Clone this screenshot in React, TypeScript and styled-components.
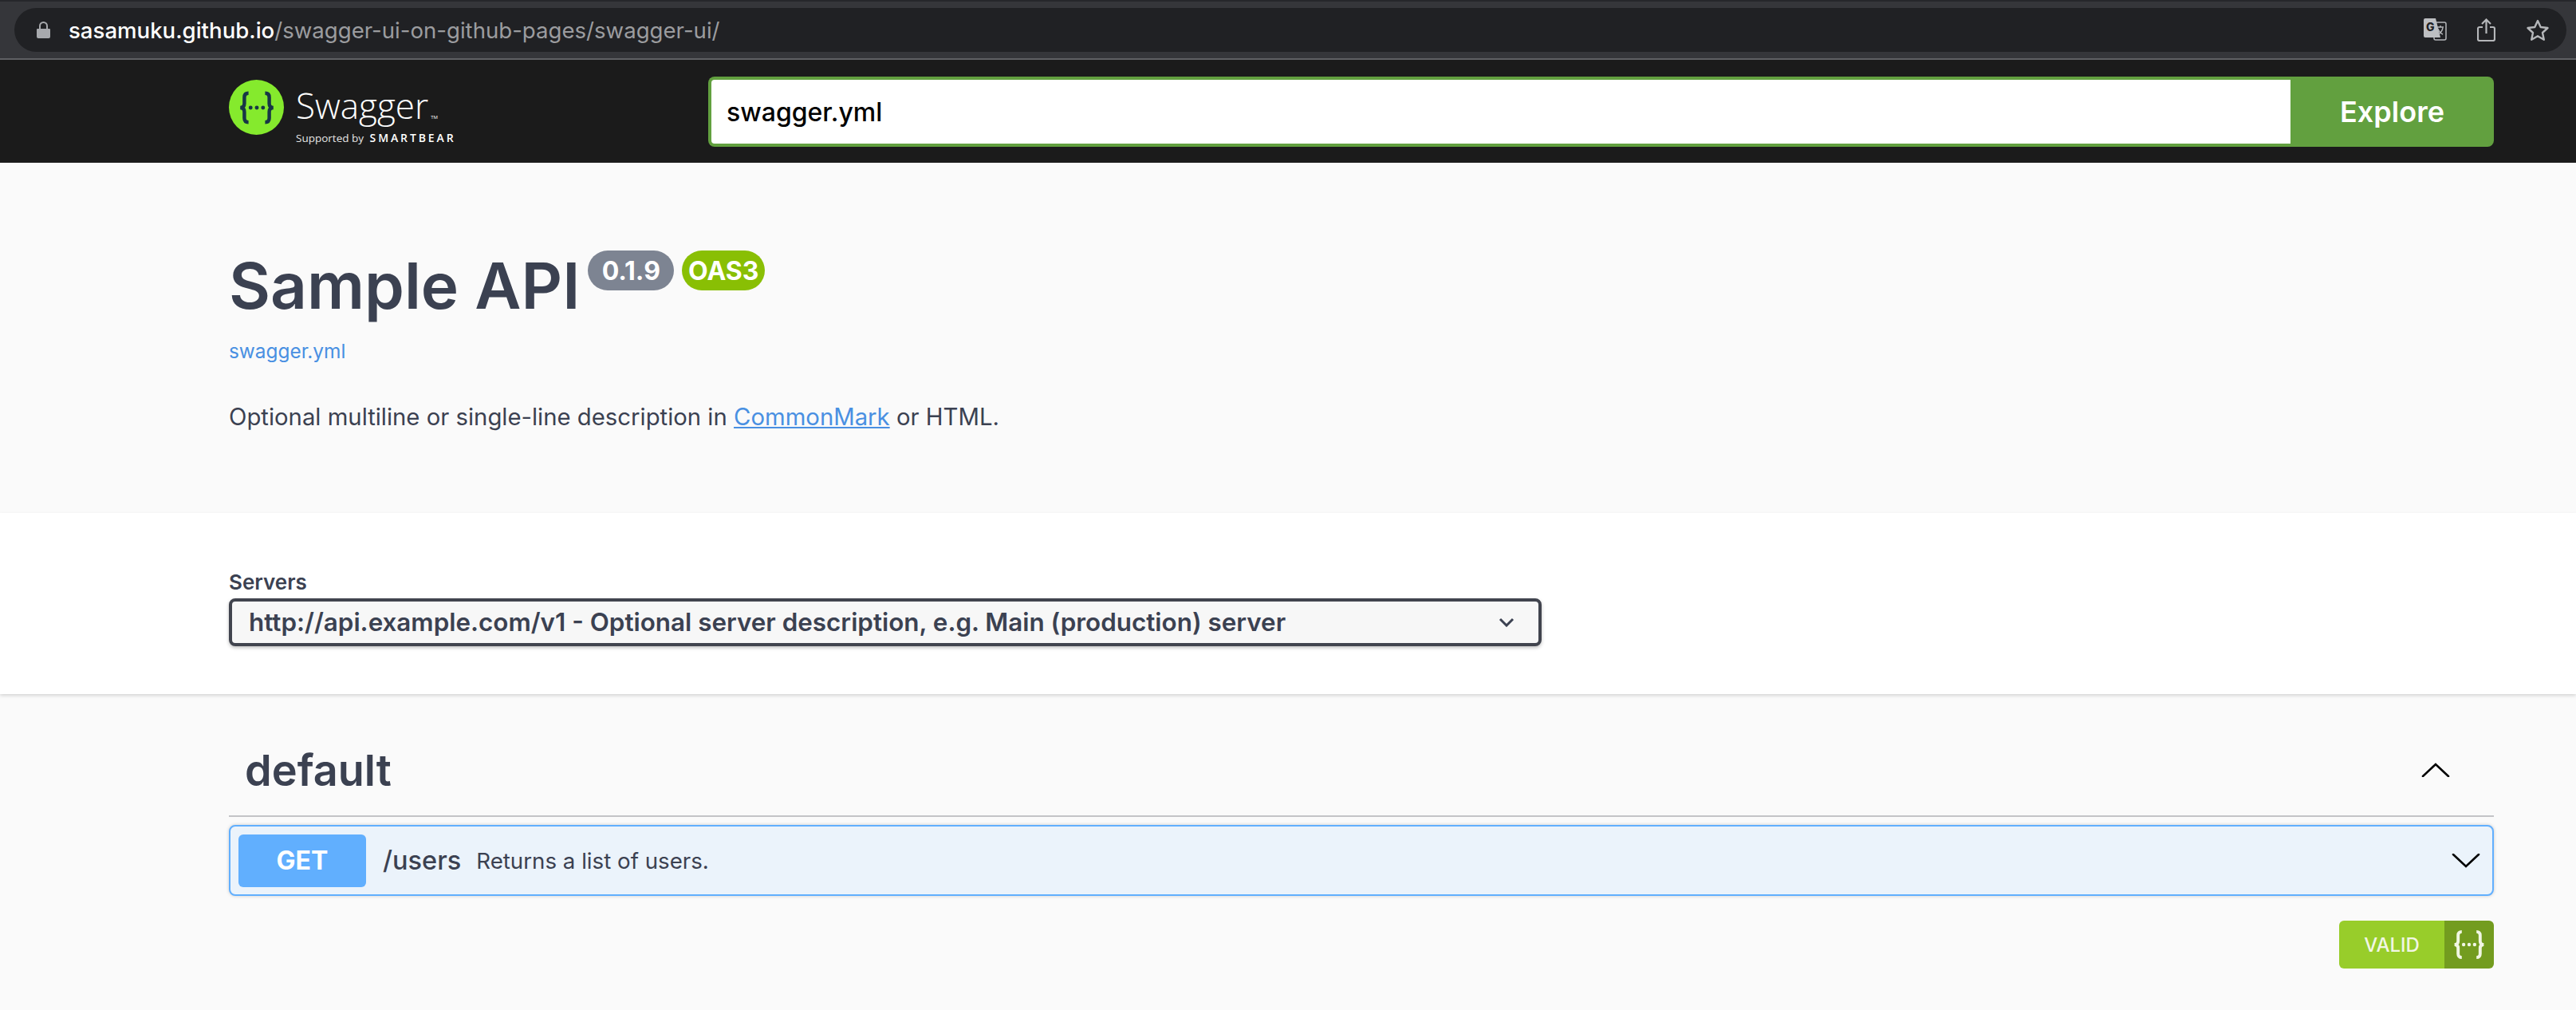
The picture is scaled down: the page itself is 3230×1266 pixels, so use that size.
import styled, {createGlobalStyle} from 'styled-components';

const GlobalStyle = createGlobalStyle`
  html, body {
    margin: 0;
    padding: 0;
    background: #fafafa;
  }
  body {
    width: 3230px;
    height: 1266px;
    overflow: hidden;
    font-family: Inter, "Liberation Sans", sans-serif;
    color: #3b4151;
  }
  * {
    box-sizing: border-box;
  }
`;

function BraceIcon({size, color}: {size: number; color: string}) {
  return (
    <svg width={size} height={size} viewBox="0 0 40 40" fill="none">
      <path
        d="M12 6c-3 0-4 1.500-4 4v6c0 2.500-1.500 4-4 4 2.500 0 4 1.500 4 4v6c0 2.500 1 4 4 4M28 6c3 0 4 1.500 4 4v6c0 2.500 1.500 4 4 4-2.500 0-4 1.500-4 4v6c0 2.500-1 4-4 4"
        stroke={color}
        strokeWidth="3.400"
      />
      <circle cx="14" cy="20" r="1.900" fill={color} />
      <circle cx="20" cy="20" r="1.900" fill={color} />
      <circle cx="26" cy="20" r="1.900" fill={color} />
    </svg>
  );
}

function Chevron({up, size}: {up?: boolean; size: number}) {
  return (
    <svg width={size} height={size / 2} viewBox="0 0 36 18" fill="none">
      <path
        d={up ? 'M2 17L18 2l16 15' : 'M2 1l16 15L34 1'}
        stroke="#000"
        strokeWidth="2.600"
        strokeLinecap="round"
      />
    </svg>
  );
}

function App() {
  return (
    <>
      <GlobalStyle />
      <BrowserBar>
        <UrlPill>
          <svg width="17" height="21" viewBox="0 0 17 21" fill="#a7a9ad">
            <path d="M1 9h15a1 1 0 0 1 1 1v9a2 2 0 0 1-2 2H2a2 2 0 0 1-2-2v-9a1 1 0 0 1 1-1z" />
            <path d="M4 9V5.500a4.500 4.500 0 0 1 9 0V9" fill="none" stroke="#a7a9ad" strokeWidth="2" />
          </svg>
          <UrlText>
            <b>sasamuku.github.io</b>/swagger-ui-on-github-pages/swagger-ui/
          </UrlText>
          <PillIcons>
            <svg width="29" height="29" viewBox="0 0 29 29">
              <rect x="13" y="5" width="15" height="22" rx="2" fill="none" stroke="#b5b7ba" strokeWidth="1.500" />
              <path d="M2 0h13l6 24H2a2 2 0 0 1-2-2V2a2 2 0 0 1 2-2z" fill="#bdbfc2" />
              <text x="3" y="16" fontSize="14" fontWeight="800" fill="#202124" fontFamily="Inter">G</text>
              <path d="M17 11h8M21 9v2M24 12c-1 5-4 7-6 8M18 13c1 3 4 6 6 7" fill="none" stroke="#b5b7ba" strokeWidth="1.400" />
            </svg>
            <svg width="23" height="29" viewBox="0 0 23 29" fill="none" stroke="#b5b7ba" strokeWidth="2.200">
              <path d="M7 11H3a2 2 0 0 0-2 2v13a2 2 0 0 0 2 2h17a2 2 0 0 0 2-2V13a2 2 0 0 0-2-2h-4" />
              <path d="M11.500 19V2M6 7l5.500-5.500L17 7" />
            </svg>
            <svg width="30" height="29" viewBox="0 0 30 29" fill="none" stroke="#b5b7ba" strokeWidth="2.400">
              <path d="M15 3l3.700 8 8.800 1-6.500 6 1.800 8.700L15 22.300l-7.800 4.400L9 18l-6.500-6 8.800-1z" strokeLinejoin="round" />
            </svg>
          </PillIcons>
        </UrlPill>
      </BrowserBar>

      <Topbar>
        <Wrapper>
          <Logo>
            <LogoCircle>
              <BraceIcon size={52} color="#173646" />
            </LogoCircle>
            <LogoWords>
              <LogoName>
                Swagger<small>TM</small>
              </LogoName>
              <LogoSub>
                Supported by <strong>SMARTBEAR</strong>
              </LogoSub>
            </LogoWords>
          </Logo>
          <SearchForm>
            <SearchInput>swagger.yml</SearchInput>
            <ExploreButton>Explore</ExploreButton>
          </SearchForm>
        </Wrapper>
      </Topbar>

      <InfoSection>
        <TitleRow>
          <Title>Sample API</Title>
          <Badge $color="#7d8492" $width={108}>0.1.9</Badge>
          <Badge $color="#89bf04" $width={104}>OAS3</Badge>
        </TitleRow>
        <SpecLink>swagger.yml</SpecLink>
        <Description>
          Optional multiline or single-line description in <u>CommonMark</u> or HTML.
        </Description>
      </InfoSection>

      <ServersSection>
        <ServersLabel>Servers</ServersLabel>
        <ServerSelect>
          http://api.example.com/v1 - Optional server description, e.g. Main (production) server
          <svg width="20" height="12" viewBox="0 0 20 12" fill="none">
            <path d="M2 2l8 8 8-8" stroke="#3b4151" strokeWidth="3" />
          </svg>
        </ServerSelect>
      </ServersSection>

      <Operations>
        <TagHeader>
          <TagName>default</TagName>
          <Chevron up size={36} />
        </TagHeader>
        <OperationRow>
          <MethodBadge>GET</MethodBadge>
          <PathText>/users</PathText>
          <Summary>Returns a list of users.</Summary>
          <Chevron size={36} />
        </OperationRow>
        <ValidatorRow>
          <ValidBadge>
            <ValidLabel>VALID</ValidLabel>
            <ValidIcon>
              <BraceIcon size={46} color="#f1f6e4" />
            </ValidIcon>
          </ValidBadge>
        </ValidatorRow>
      </Operations>
    </>
  );
}

const BrowserBar = styled.div`
  height: 75px;
  padding: 10px 12px 8px 18px;
  background: #35363a;
  border-top: 2px solid #26272b;
  border-bottom: 2px solid #5f6064;
`;

const UrlPill = styled.div`
  height: 55px;
  margin-top: -2px;
  display: flex;
  align-items: center;
  padding: 0 21px 0 28px;
  background: #202124;
  border-radius: 28px;
`;

const UrlText = styled.div`
  margin-left: 23px;
  flex: 1;
  font-size: 27.600px;
  color: #9b9c9f;

  b {
    font-weight: 500;
    color: #fff;
  }
`;

const PillIcons = styled.div`
  display: flex;
  align-items: center;
  gap: 38px;
`;

const Topbar = styled.div`
  height: 129px;
  background: #1b1b1b;
`;

const Wrapper = styled.div`
  width: 2840px;
  margin-left: 287px;
  padding-top: 21px;
  display: flex;
  align-items: flex-start;
  justify-content: space-between;
`;

const Logo = styled.div`
  margin-top: 4px;
  display: flex;
  align-items: flex-start;
  gap: 15px;
`;

const LogoCircle = styled.div`
  width: 69px;
  height: 69px;
  display: flex;
  align-items: center;
  justify-content: center;
  border-radius: 50%;
  background: #85ea2d;
`;

const LogoWords = styled.div`
  margin-top: 7px;
  display: flex;
  flex-direction: column;
  font-family: 'Open Sans', sans-serif;
  color: #fff;
`;

const LogoName = styled.div`
  font-size: 44px;
  font-weight: 300;
  line-height: 50px;

  small {
    margin-left: 3px;
    font-size: 6px;
    font-weight: 400;
  }
`;

const LogoSub = styled.div`
  margin-top: -7px;
  font-size: 13.500px;
  line-height: 16px;
  white-space: nowrap;
  color: #e4e4e4;

  strong {
    margin-left: 4px;
    font-size: 14px;
    font-weight: 600;
    letter-spacing: 2.900px;
    color: #fff;
  }
`;

const SearchForm = styled.div`
  width: 2239px;
  height: 88px;
  display: flex;
`;

const SearchInput = styled.div`
  flex: 1;
  display: flex;
  align-items: center;
  padding-left: 19px;
  background: #fff;
  border: 4px solid #62a03f;
  border-right: none;
  border-radius: 8px 0 0 8px;
  font-size: 32px;
  font-weight: 500;
  color: #000;
`;

const ExploreButton = styled.div`
  width: 255px;
  display: flex;
  align-items: center;
  justify-content: center;
  background: #62a03f;
  border-radius: 0 8px 8px 0;
  font-size: 36px;
  font-weight: 600;
  color: #fff;
`;

const InfoSection = styled.div`
  height: 439px;
  padding: 102px 0 0 287px;
`;

const TitleRow = styled.div`
  display: flex;
  align-items: flex-start;
  gap: 10px;
`;

const Title = styled.div`
  margin-top: 2px;
  font-size: 80px;
  font-weight: 600;
  line-height: 100px;
`;

const Badge = styled.div<{$color: string; $width: number}>`
  margin-top: 8px;
  width: ${props => props.$width}px;
  height: 50px;
  display: flex;
  align-items: center;
  justify-content: center;
  border-radius: 25px;
  background: ${props => props.$color};
  font-size: 32px;
  font-weight: 700;
  color: #fff;
`;

const SpecLink = styled.div`
  margin-top: 17px;
  font-size: 24.400px;
  color: #4990e2;
`;

const Description = styled.div`
  margin-top: 50px;
  font-size: 29.300px;

  u {
    color: #4990e2;
  }
`;

const ServersSection = styled.div`
  height: 227px;
  padding: 72px 0 0 287px;
  background: #fff;
  box-shadow: 0 2px 4px 0 rgba(0, 0, 0, 0.15);
  position: relative;
`;

const ServersLabel = styled.div`
  font-size: 26px;
  font-weight: 600;
  line-height: 30px;
`;

const ServerSelect = styled.div`
  width: 1646px;
  height: 60px;
  margin-top: 5px;
  padding: 0 30px 0 21px;
  display: flex;
  align-items: center;
  justify-content: space-between;
  background: #f7f7f7;
  border: 4px solid #41444e;
  border-radius: 8px;
  box-shadow: 0 2px 4px rgba(0, 0, 0, 0.25);
  font-size: 31.400px;
  font-weight: 600;
`;

const Operations = styled.div`
  padding: 0 103px 0 287px;
`;

const TagHeader = styled.div`
  height: 154px;
  padding: 38px 55px 0 20px;
  display: flex;
  align-items: center;
  justify-content: space-between;
  border-bottom: 2px solid #c3c4c7;
`;

const TagName = styled.div`
  font-size: 54px;
  font-weight: 600;
`;

const OperationRow = styled.div`
  height: 89px;
  margin-top: 10px;
  padding: 0 15px 0 10px;
  display: flex;
  align-items: center;
  background: #ebf3fb;
  border: 2px solid #61affe;
  border-radius: 8px;
  box-shadow: 0 0 4px rgba(0, 0, 0, 0.19);
`;

const MethodBadge = styled.div`
  width: 160px;
  height: 66px;
  display: flex;
  align-items: center;
  justify-content: center;
  background: #61affe;
  border-radius: 6px;
  font-size: 32px;
  font-weight: 700;
  color: #fff;
`;

const PathText = styled.div`
  margin-left: 21px;
  font-size: 32.500px;
  font-weight: 500;
`;

const Summary = styled.div`
  margin-left: 19px;
  flex: 1;
  font-size: 27.700px;
`;

const ValidatorRow = styled.div`
  margin-top: 31px;
  display: flex;
  justify-content: flex-end;
`;

const ValidBadge = styled.div`
  width: 194px;
  height: 60px;
  display: flex;
  border-radius: 6px;
  overflow: hidden;
`;

const ValidLabel = styled.div`
  flex: 1;
  display: flex;
  align-items: center;
  justify-content: center;
  background: #98cd2a;
  font-size: 24px;
  font-weight: 500;
  color: #f1f6e4;
`;

const ValidIcon = styled.div`
  width: 62px;
  display: flex;
  align-items: center;
  justify-content: center;
  background: #739c1f;
`;

export default App;
